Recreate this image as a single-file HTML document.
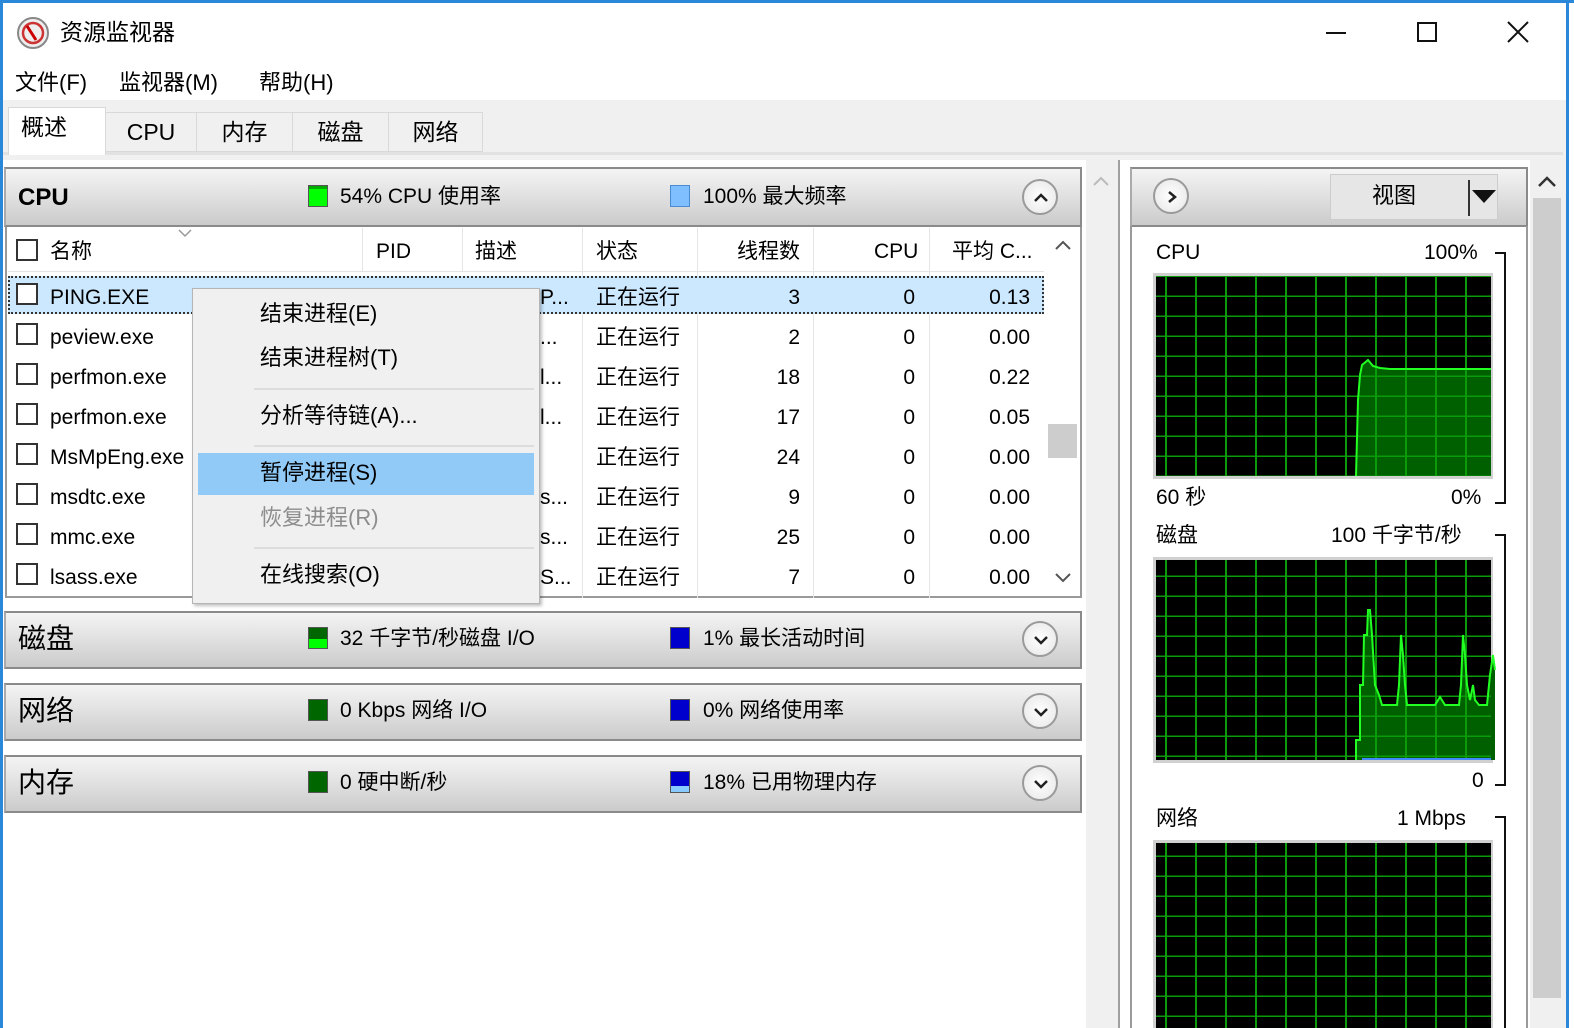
<!DOCTYPE html>
<html><head><meta charset="utf-8"><style>
*{box-sizing:border-box;margin:0;padding:0}
body{width:1574px;height:1028px;overflow:hidden;background:#fff;font-family:"Liberation Sans","Noto Sans CJK SC",sans-serif;color:#000;position:relative;font-size:21px}
.a{position:absolute;white-space:nowrap;line-height:26px}
.hdr{position:absolute;background:linear-gradient(#f4f4f4,#e2e2e2 45%,#cbcbcb);border:2px solid #8a8a8a;border-left-color:#aaa}
.sq{position:absolute;width:20px;height:22px;border:1px solid #555}
.cb{position:absolute;width:22px;height:22px;border:2px solid #333;background:#fff}
.circ{position:absolute;width:36px;height:36px;border-radius:50%;border:2px solid #9a9a9a;background:radial-gradient(#fff,#e6e6e6)}
.circ svg{position:absolute;left:9px;top:10px}
.col{position:absolute;text-align:right;line-height:40px;top:278px}
.tab{position:absolute;top:112px;height:40px;border:1px solid #d9d9d9;background:#f0f0f0;font-size:23px;padding-top:5px;text-align:center;line-height:28px}
</style></head><body>
<div class="a" style="left:0;top:0;width:1574px;height:3px;background:#2b88d8"></div>
<div class="a" style="left:0;top:0;width:3px;height:1028px;background:#2b88d8"></div>
<div class="a" style="left:1566px;top:0;width:3px;height:1028px;background:#2b88d8"></div>
<svg class="a" style="left:16px;top:16px" width="34" height="34" viewBox="0 0 34 34"><circle cx="17" cy="17" r="15" fill="#eee" stroke="#888" stroke-width="2"/><circle cx="17" cy="17" r="10" fill="none" stroke="#c33" stroke-width="2.5"/><path d="M11 10 L20 24" stroke="#c00" stroke-width="3"/></svg>
<div class="a" style="left:60px;top:19px;font-size:23px">资源监视器</div>
<div class="a" style="left:1326px;top:32px;width:20px;height:2px;background:#111"></div>
<div class="a" style="left:1417px;top:22px;width:20px;height:20px;border:2px solid #111"></div>
<svg class="a" style="left:1507px;top:21px" width="22" height="22"><path d="M1 1L21 21M21 1L1 21" stroke="#111" stroke-width="2"/></svg>
<div class="a" style="left:15px;top:70px;font-size:22px">文件(F)</div>
<div class="a" style="left:119px;top:70px;font-size:22px">监视器(M)</div>
<div class="a" style="left:259px;top:70px;font-size:22px">帮助(H)</div>
<div class="a" style="left:3px;top:100px;width:1563px;height:60px;background:#f0f0f0"></div>
<div class="a" style="left:3px;top:152px;width:1560px;height:3px;background:#e2e2e2"></div>
<div class="a" style="left:8px;top:107px;width:98px;height:48px;background:#fff;border:1px solid #d9d9d9;border-bottom:none;font-size:23px;padding:6px 0 0 12px">概述</div>
<div class="tab" style="left:105px;width:92px">CPU</div>
<div class="tab" style="left:196px;width:97px">内存</div>
<div class="tab" style="left:292px;width:97px">磁盘</div>
<div class="tab" style="left:388px;width:95px">网络</div>

<div class="hdr" style="left:4px;top:167px;width:1078px;height:60px"></div>
<div class="a" style="left:18px;top:185px;font-size:24px;font-weight:bold">CPU</div>
<div class="sq" style="left:308px;top:185px;background:linear-gradient(#0a0 0,#0a0 15%,#0f0 15%);"></div>
<div class="a" style="left:340px;top:184px">54% CPU 使用率</div>
<div class="sq" style="left:670px;top:185px;background:#7fbfff;border-color:#4a8ad0"></div>
<div class="a" style="left:703px;top:184px">100% 最大频率</div>
<div class="circ" style="left:1022px;top:179px"><svg width="16" height="14"><path d="M2 10L8 4L14 10" fill="none" stroke="#222" stroke-width="2.5"/></svg></div>

<div class="a" style="left:5px;top:227px;width:1077px;height:371px;border:2px solid #9a9a9a;border-top:none;background:#fff"></div>
<div class="a" style="left:8px;top:228px;width:1036px;height:44px;border-bottom:1px solid #e5e5e5"></div>
<div class="a" style="left:362px;top:228px;width:1px;height:44px;background:#e5e5e5"></div>
<div class="a" style="left:462px;top:228px;width:1px;height:44px;background:#e5e5e5"></div>
<div class="a" style="left:582px;top:228px;width:1px;height:370px;background:#e5e5e5"></div>
<div class="a" style="left:697px;top:228px;width:1px;height:370px;background:#e5e5e5"></div>
<div class="a" style="left:813px;top:228px;width:1px;height:370px;background:#e5e5e5"></div>
<div class="a" style="left:929px;top:228px;width:1px;height:370px;background:#e5e5e5"></div>
<svg class="a" style="left:178px;top:229px" width="14" height="9"><path d="M1 1L7 7L13 1" fill="none" stroke="#999" stroke-width="1.5"/></svg>
<div class="cb" style="left:16px;top:239px"></div>
<div class="a" style="left:50px;top:239px">名称</div>
<div class="a" style="left:376px;top:239px">PID</div>
<div class="a" style="left:475px;top:239px">描述</div>
<div class="a" style="left:596px;top:239px">状态</div>
<div class="a" style="left:737px;top:239px">线程数</div>
<div class="a" style="left:874px;top:239px">CPU</div>
<div class="a" style="left:952px;top:239px">平均 C...</div>
<div class="a" style="left:1045px;top:228px;width:35px;height:368px;background:#fff"></div>
<svg class="a" style="left:1055px;top:240px" width="16" height="10"><path d="M1 9L8 2L15 9" fill="none" stroke="#555" stroke-width="2"/></svg>
<svg class="a" style="left:1055px;top:573px" width="16" height="10"><path d="M1 1L8 8L15 1" fill="none" stroke="#555" stroke-width="2"/></svg>
<div class="a" style="left:1048px;top:424px;width:29px;height:34px;background:#cdcdcd"></div>

<div class="a" style="left:8px;top:276px;width:1036px;height:38px;background:#cce8ff;border:2px dotted #333"></div>
<div class="cb" style="left:16px;top:283px"></div><div class="cb" style="left:16px;top:323px"></div><div class="cb" style="left:16px;top:363px"></div><div class="cb" style="left:16px;top:403px"></div><div class="cb" style="left:16px;top:443px"></div><div class="cb" style="left:16px;top:483px"></div><div class="cb" style="left:16px;top:523px"></div><div class="cb" style="left:16px;top:563px"></div>
<div class="col" style="left:50px;text-align:left">PING.EXE<br>peview.exe<br>perfmon.exe<br>perfmon.exe<br>MsMpEng.exe<br>msdtc.exe<br>mmc.exe<br>lsass.exe</div>
<div class="col" style="left:540px;text-align:left">P...<br>...<br>l...<br>l...<br>&nbsp;<br>s...<br>s...<br>S...</div>
<div class="col" style="left:596px;text-align:left">正在运行<br>正在运行<br>正在运行<br>正在运行<br>正在运行<br>正在运行<br>正在运行<br>正在运行</div>
<div class="col" style="left:700px;width:100px">3<br>2<br>18<br>17<br>24<br>9<br>25<br>7</div>
<div class="col" style="left:815px;width:100px">0<br>0<br>0<br>0<br>0<br>0<br>0<br>0</div>
<div class="col" style="left:930px;width:100px">0.13<br>0.00<br>0.22<br>0.05<br>0.00<br>0.00<br>0.00<br>0.00</div>

<div class="a" style="left:192px;top:288px;width:348px;height:316px;background:#f0f0f0;border:1px solid #b5b5b5;box-shadow:2px 2px 3px rgba(0,0,0,.25)"></div>
<div class="a" style="left:254px;top:388px;width:280px;height:2px;background:#dcdcdc"></div>
<div class="a" style="left:254px;top:445px;width:280px;height:2px;background:#dcdcdc"></div>
<div class="a" style="left:254px;top:547px;width:280px;height:2px;background:#dcdcdc"></div>
<div class="a" style="left:198px;top:453px;width:336px;height:42px;background:#91c9f7"></div>
<div class="a" style="left:260px;top:301px;font-size:22px">结束进程(E)</div>
<div class="a" style="left:260px;top:345px;font-size:22px">结束进程树(T)</div>
<div class="a" style="left:260px;top:403px;font-size:22px">分析等待链(A)...</div>
<div class="a" style="left:260px;top:460px;font-size:22px">暂停进程(S)</div>
<div class="a" style="left:260px;top:505px;font-size:22px;color:#8d8d8d">恢复进程(R)</div>
<div class="a" style="left:260px;top:562px;font-size:22px">在线搜索(O)</div>

<div class="hdr" style="left:4px;top:611px;width:1078px;height:58px"></div>
<div class="a" style="left:18px;top:624px;font-size:28px;line-height:30px">磁盘</div>
<div class="sq" style="left:308px;top:627px;background:linear-gradient(#060 0,#060 55%,#0f0 55%)"></div>
<div class="a" style="left:340px;top:626px">32 千字节/秒磁盘 I/O</div>
<div class="sq" style="left:670px;top:627px;background:#00c"></div>
<div class="a" style="left:703px;top:626px">1% 最长活动时间</div>
<div class="circ" style="left:1022px;top:621px"><svg width="16" height="14"><path d="M2 4L8 10L14 4" fill="none" stroke="#222" stroke-width="2.5"/></svg></div>

<div class="hdr" style="left:4px;top:683px;width:1078px;height:58px"></div>
<div class="a" style="left:18px;top:696px;font-size:28px;line-height:30px">网络</div>
<div class="sq" style="left:308px;top:699px;background:#060"></div>
<div class="a" style="left:340px;top:698px">0 Kbps 网络 I/O</div>
<div class="sq" style="left:670px;top:699px;background:#00c"></div>
<div class="a" style="left:703px;top:698px">0% 网络使用率</div>
<div class="circ" style="left:1022px;top:693px"><svg width="16" height="14"><path d="M2 4L8 10L14 4" fill="none" stroke="#222" stroke-width="2.5"/></svg></div>

<div class="hdr" style="left:4px;top:755px;width:1078px;height:58px"></div>
<div class="a" style="left:18px;top:768px;font-size:28px;line-height:30px">内存</div>
<div class="sq" style="left:308px;top:771px;background:#060"></div>
<div class="a" style="left:340px;top:770px">0 硬中断/秒</div>
<div class="sq" style="left:670px;top:771px;background:linear-gradient(#00c 0,#00c 70%,#8cf 70%)"></div>
<div class="a" style="left:703px;top:770px">18% 已用物理内存</div>
<div class="circ" style="left:1022px;top:765px"><svg width="16" height="14"><path d="M2 4L8 10L14 4" fill="none" stroke="#222" stroke-width="2.5"/></svg></div>

<div class="a" style="left:1086px;top:160px;width:32px;height:868px;background:#f0f0f0"></div>
<div class="a" style="left:1118px;top:160px;width:2px;height:868px;background:#a0a0a0"></div>
<svg class="a" style="left:1093px;top:176px" width="16" height="10"><path d="M1 9L8 2L15 9" fill="none" stroke="#bbb" stroke-width="2"/></svg>

<div class="hdr" style="left:1130px;top:167px;width:398px;height:60px"></div>
<div class="a" style="left:1130px;top:226px;width:398px;height:802px;border-left:2px solid #9a9a9a;border-right:2px solid #9a9a9a"></div>
<div class="circ" style="left:1153px;top:178px"><svg width="16" height="14"><path d="M5 2L11 7L5 12" fill="none" stroke="#222" stroke-width="2.5"/></svg></div>
<div class="a" style="left:1330px;top:174px;width:168px;height:46px;background:#e6e6e6;border:1px solid #ccc"></div>
<div class="a" style="left:1372px;top:183px;font-size:22px">视图</div>
<div class="a" style="left:1468px;top:180px;width:2px;height:36px;background:#333"></div>
<svg class="a" style="left:1472px;top:190px" width="24" height="14"><path d="M0 0H24L12 13Z" fill="#111"/></svg>

<div class="a" style="left:1530px;top:160px;width:36px;height:868px;background:#f0f0f0"></div>
<div class="a" style="left:1533px;top:198px;width:28px;height:800px;background:#cdcdcd"></div>
<svg class="a" style="left:1538px;top:176px" width="18" height="11"><path d="M1 10L9 2L17 10" fill="none" stroke="#333" stroke-width="2.5"/></svg>

<svg class="a" style="left:0;top:0" width="1574" height="1028">
<defs><pattern id="g" x="1157" y="277" width="30" height="20" patternUnits="userSpaceOnUse"><path d="M9 0V20M0 19.5H30" stroke="#0a9a0a" stroke-width="2"/></pattern></defs>
<rect x="1153" y="273" width="340" height="206" fill="#d0d0d0"/>
<rect x="1156" y="276" width="335" height="200" fill="#000"/>
<polygon points="1356,476 1358,400 1360,375 1362,365 1368,360 1373,366 1380,368 1390,369 1491,369 1491,476" fill="#006000"/>
<rect x="1156" y="276" width="335" height="200" fill="url(#g)"/>
<polyline points="1356,476 1358,400 1360,375 1362,365 1368,360 1373,366 1380,368 1390,369 1491,369" fill="none" stroke="#2f2" stroke-width="2"/>
<rect x="1153" y="557" width="340" height="206" fill="#d0d0d0"/>
<rect x="1156" y="560" width="335" height="200" fill="#000"/>
<g transform="translate(1157,560)">
<polygon points="199,200 199,180 203,180 203,125 206,125 207,75 210,75 211,50 213,50 215,75 218,125 222,135 225,145 240,145 242,125 244,75 246,95 248,125 250,145 278,145 283,137 288,145 302,145 304,125 306,75 308,95 310,125 313,140 316,125 318,140 322,145 330,145 333,115 336,95 338,110 338,200" fill="#006000"/>
</g>
<rect x="1156" y="560" width="335" height="200" fill="url(#g)"/>
<g transform="translate(1157,560)">
<polyline points="199,200 199,180 203,180 203,125 206,125 207,75 210,75 211,50 213,50 215,75 218,125 222,135 225,145 240,145 242,125 244,75 246,95 248,125 250,145 278,145 283,137 288,145 302,145 304,125 306,75 308,95 310,125 313,140 316,125 318,140 322,145 330,145 333,115 336,95 338,110" fill="none" stroke="#2f2" stroke-width="2"/>
<path d="M205 199H334" stroke="#48f" stroke-width="2"/>
</g>
<rect x="1153" y="840" width="340" height="200" fill="#d0d0d0"/>
<rect x="1156" y="843" width="335" height="200" fill="#000"/>
<rect x="1156" y="843" width="335" height="200" fill="url(#g)"/>
<path d="M1495 253H1505V503H1495M1495 535H1505V785H1495M1495 817H1505V1028" fill="none" stroke="#111" stroke-width="2"/>
</svg>
<div class="a" style="left:1156px;top:240px">CPU</div>
<div class="a" style="left:1424px;top:240px">100%</div>
<div class="a" style="left:1156px;top:485px">60 秒</div>
<div class="a" style="left:1451px;top:485px">0%</div>
<div class="a" style="left:1156px;top:523px">磁盘</div>
<div class="a" style="left:1331px;top:523px">100 千字节/秒</div>
<div class="a" style="left:1472px;top:768px">0</div>
<div class="a" style="left:1156px;top:806px">网络</div>
<div class="a" style="left:1397px;top:806px">1 Mbps</div>
</body></html>
